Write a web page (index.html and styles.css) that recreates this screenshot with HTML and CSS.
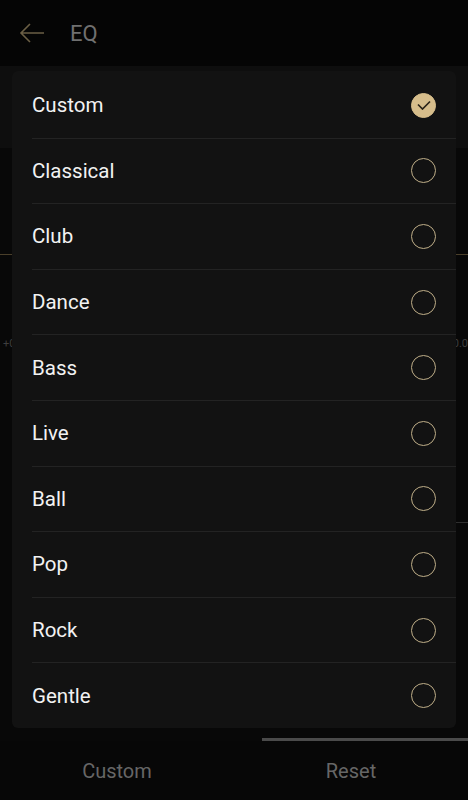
FILE: index.html
```html
<!DOCTYPE html>
<html lang="en">

<head>
  <meta charset="UTF-8">
  <meta name="viewport" content="width=device-width, initial-scale=1.0">
  <title>EQ</title>

  <link rel="stylesheet" href="styles.css">
</head>

<body>
  <div class="page">
    <div class="top-bar">
      <svg class="back" width="26" height="20" viewBox="0 0 26 20">
        <path d="M25 10H2M11 1L2 10l9 9" fill="none" stroke="#6b5f45" stroke-width="1.6" />
      </svg>
      <span class="title">EQ</span>
    </div>

    <div class="band"></div>

    <div class="eq-area">
      <div class="gold-line"></div>
      <div class="gain-row">
        <span>+0</span>
        <span>0.0</span>
      </div>
      <div class="gray-line"></div>
    </div>

    <div class="tab-indicator"></div>
    <div class="tabs">
      <div class="tab">Custom</div>
      <div class="tab">Reset</div>
    </div>
  </div>

  <!-- preset picker over the page -->
  <div class="modal">
    <div class="option checked">
      <span>Custom</span>
      <span class="radio">
        <svg width="14" height="10" viewBox="0 0 14 10">
          <path d="M1 4.5l4.5 4.5L13 1.5" fill="none" stroke="#2a2418" stroke-width="1.7" />
        </svg>
      </span>
    </div>
    <div class="option"><span>Classical</span><span class="radio"></span></div>
    <div class="option"><span>Club</span><span class="radio"></span></div>
    <div class="option"><span>Dance</span><span class="radio"></span></div>
    <div class="option"><span>Bass</span><span class="radio"></span></div>
    <div class="option"><span>Live</span><span class="radio"></span></div>
    <div class="option"><span>Ball</span><span class="radio"></span></div>
    <div class="option"><span>Pop</span><span class="radio"></span></div>
    <div class="option"><span>Rock</span><span class="radio"></span></div>
    <div class="option"><span>Gentle</span><span class="radio"></span></div>
  </div>
</body>

</html>
```

FILE: styles.css
```css
html,
body {
  margin: 0;
  height: 100%;
  background-color: #080808;
  font-family: Roboto, "Noto Sans", sans-serif;
}

.page {
  display: flex;
  flex-direction: column;
  height: 800px;
}

.top-bar {
  height: 66px;
  display: flex;
  align-items: center;
  background-color: #050505;
  padding-left: 19px;
}

.back {
  margin-right: 25px;
}

.title {
  color: #707070;
  font-size: 22px;
}

.band {
  height: 82px;
  background-color: #0e0e0e;
}

.eq-area {
  flex: 1;
  display: flex;
  flex-direction: column;
  background-color: #080808;
}

.gold-line {
  margin-top: 106px;
  height: 1px;
  background-color: #4a3f2a;
}

.gain-row {
  margin-top: 82px;
  height: 14px;
  display: flex;
  justify-content: space-between;
  padding: 0 0 0 3px;
  color: #3e3e3e;
  font-size: 11px;
}

.gray-line {
  margin-top: 171px;
  margin-left: 440px;
  height: 1px;
  background-color: #2e2e2e;
}

.tab-indicator {
  height: 3px;
  margin-left: 262px;
  background-color: #4a4a4a;
}

.tabs {
  height: 59px;
  display: flex;
  background-color: #070707;
}

.tab {
  flex: 1;
  display: flex;
  align-items: center;
  justify-content: center;
  color: #666;
  font-size: 20px;
}

.modal {
  position: fixed;
  left: 12px;
  top: 71px;
  width: 444px;
  padding-top: 2px;
  background-color: #121212;
  border-radius: 6px;
}

.option {
  height: 64.6px;
  margin-left: 20px;
  padding-right: 20px;
  display: flex;
  align-items: center;
  justify-content: space-between;
  color: #f2f2f2;
  font-size: 20.5px;
  border-bottom: 1px solid #232323;
}

.option:last-child {
  border-bottom: none;
}

.radio {
  width: 23px;
  height: 23px;
  border: 1.5px solid #bfae88;
  border-radius: 50%;
  display: flex;
  align-items: center;
  justify-content: center;
}

.option.checked .radio {
  background-color: #d6bd8b;
  border-color: #d6bd8b;
}
```
